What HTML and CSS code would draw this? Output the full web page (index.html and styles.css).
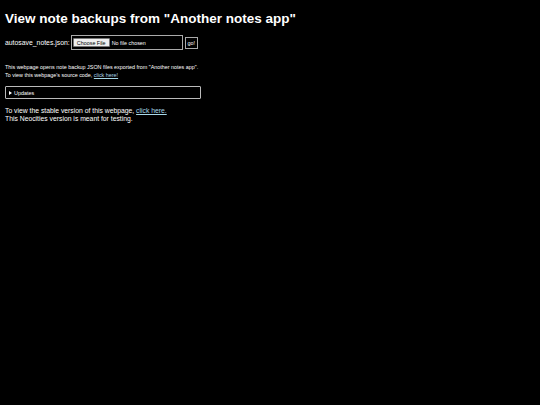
FILE: index.html
```html
<!DOCTYPE html>
<html lang="en">
<head>
    <meta charset="UTF-8">
    <title>View note backups</title>
    <link rel="stylesheet" href="styles.css">
</head>
<body>
    <h1>View note backups from "Another notes app"</h1>

    <div class="picker">
        <label class="picker-label" for="backup">autosave_notes.json:</label>
        <span class="file-box">
            <button class="choose-btn" type="button">Choose File</button>
            <span class="file-name">No file chosen</span>
        </span>
        <button class="go-btn" type="button">go!</button>
    </div>

    <p class="about">
        This webpage opens note backup JSON files exported from "Another notes app".<br>
        To view this webpage's source code, <a href="#">click here!</a>
    </p>

    <div class="updates"><span class="arrow"></span>Updates</div>

    <p class="stable">
        To view the stable version of this webpage, <a href="#">click here.</a><br>
        This Neocities version is meant for testing.
    </p>
</body>
</html>
```

FILE: styles.css
```css
* {
    margin: 0;
    padding: 0;
    box-sizing: border-box;
}

body {
    background: #000;
    color: #fff;
    font-family: "Liberation Sans", Arial, sans-serif;
    padding: 11px 5px;
    min-height: 100vh;
}

h1 {
    font-size: 13.5px;
    line-height: 16px;
    font-weight: bold;
}

a {
    color: #a8d8e8;
}

.picker {
    display: flex;
    align-items: center;
    margin-top: 8px;
    height: 15px;
}

.picker-label {
    font-size: 6.85px;
    margin-right: 1px;
}

.file-box {
    display: flex;
    align-items: center;
    width: 112px;
    height: 15px;
    border: 1px solid #aaa;
    padding-left: 1px;
    margin-right: 2px;
}

.choose-btn {
    font-family: inherit;
    font-size: 5.4px;
    width: 37px;
    height: 9px;
    background: #efefef;
    color: #000;
    border: 1px solid #767676;
    border-radius: 1px;
    margin-right: 2px;
}

.file-name {
    font-size: 5.4px;
}

.go-btn {
    font-family: inherit;
    font-size: 5.4px;
    width: 13px;
    height: 12px;
    background: #000;
    color: #fff;
    border: 1px solid #aaa;
}

.about {
    font-size: 5.4px;
    line-height: 8px;
    margin-top: 13px;
}

.updates {
    display: flex;
    align-items: center;
    width: 196px;
    height: 13px;
    border: 1px solid #bbb;
    border-radius: 1px;
    margin-top: 7px;
    padding-left: 3px;
    font-size: 5.4px;
}

.arrow {
    border-left: 3px solid #fff;
    border-top: 2px solid transparent;
    border-bottom: 2px solid transparent;
    margin-right: 2px;
}

.stable {
    font-size: 6.8px;
    line-height: 8px;
    margin-top: 8px;
}
```
